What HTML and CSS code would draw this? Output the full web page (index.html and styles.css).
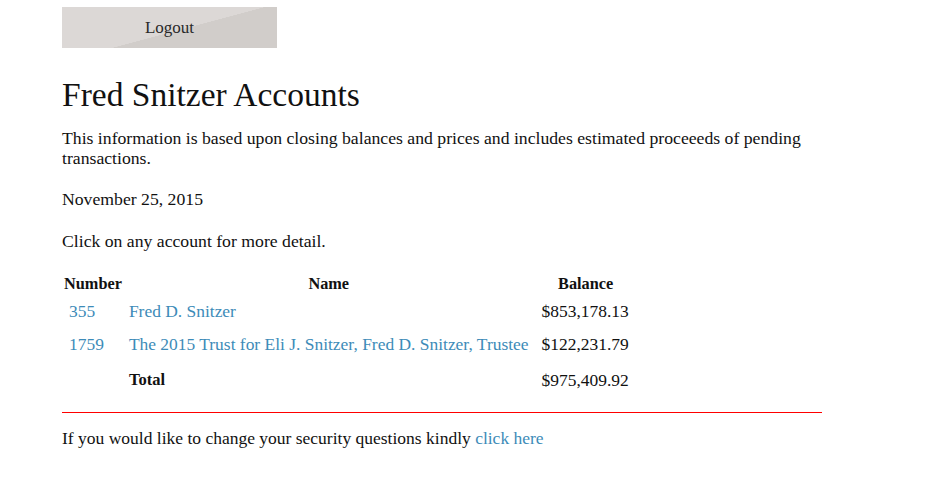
FILE: index.html
```html
<!DOCTYPE html>
<html>
<head>
<meta charset="utf-8">
<link rel="stylesheet" href="styles.css">
</head>
<body>
<div class="page">
  <div class="topbar"><a class="logout" href="#">Logout</a></div>
  <h1 class="title">Fred Snitzer Accounts</h1>
  <p class="intro">This information is based upon closing balances and prices and includes estimated proceeeds of pending transactions.</p>
  <p class="date">November 25, 2015</p>
  <p class="hint">Click on any account for more detail.</p>
  <table class="accounts">
    <thead>
      <tr><th class="c-num">Number</th><th class="c-name">Name</th><th class="c-bal">Balance</th></tr>
    </thead>
    <tbody>
      <tr class="row1"><td class="c-num"><a href="#">355</a></td><td class="c-name"><a href="#">Fred D. Snitzer</a></td><td class="c-bal">$853,178.13</td></tr>
      <tr class="row2"><td class="c-num"><a href="#">1759</a></td><td class="c-name"><a href="#">The 2015 Trust for Eli J. Snitzer, Fred D. Snitzer, Trustee</a></td><td class="c-bal">$122,231.79</td></tr>
      <tr class="total"><td class="c-num"></td><td class="c-name"><strong>Total</strong></td><td class="c-bal">$975,409.92</td></tr>
    </tbody>
  </table>
  <div class="rule"></div>
  <p class="footer">If you would like to change your security questions kindly <a href="#">click here</a></p>
</div>
</body>
</html>
```

FILE: styles.css
```css
html, body { margin: 0; padding: 0; background: #fff; }
body { font-family: "Liberation Serif", "DejaVu Serif", serif; color: #111; font-size: 17.7px; }
.page { width: 760px; margin-left: 62px; padding-top: 7px; }
.topbar { display: flex; }
.logout {
  display: flex; align-items: center; justify-content: center;
  width: 215px; height: 41px;
  background: linear-gradient(165deg, #dcd8d6 0%, #dcd8d6 55%, #d1cdca 55.3%, #d1cdca 100%);
  color: #2a2a2a; text-decoration: none; font-size: 17px;
}
.title { font-weight: normal; font-size: 33.5px; margin: 27px 0 13px; line-height: 1.2; }
.intro { margin: 0 0 21px; line-height: 20px; }
.date { margin: 0 0 22px; line-height: 20px; }
.hint { margin: 0 0 21px; line-height: 20px; }
a { color: #3d8bb8; text-decoration: none; }
.accounts { border-collapse: collapse; font-size: 17.45px; }
.accounts th { font-weight: bold; font-size: 16.3px; padding: 2px 0 1px; line-height: 20px; }
.accounts td { padding: 6px 7px; line-height: 20px; }
.accounts .c-num { text-align: left; }
.accounts th.c-num { padding-left: 2px; }
.accounts .c-bal { padding-left: 6px; }
.accounts th.c-bal { padding-right: 6px; }
.accounts tr.row2 td { padding-top: 7px; }
.accounts tr.total td { padding-top: 9px; }
.accounts tr.total strong { font-size: 16.5px; }
.rule { height: 1px; background: #f00; margin: 16px 0 15px; }
.footer { margin: 0; line-height: 20px; font-size: 17.5px; }
```
